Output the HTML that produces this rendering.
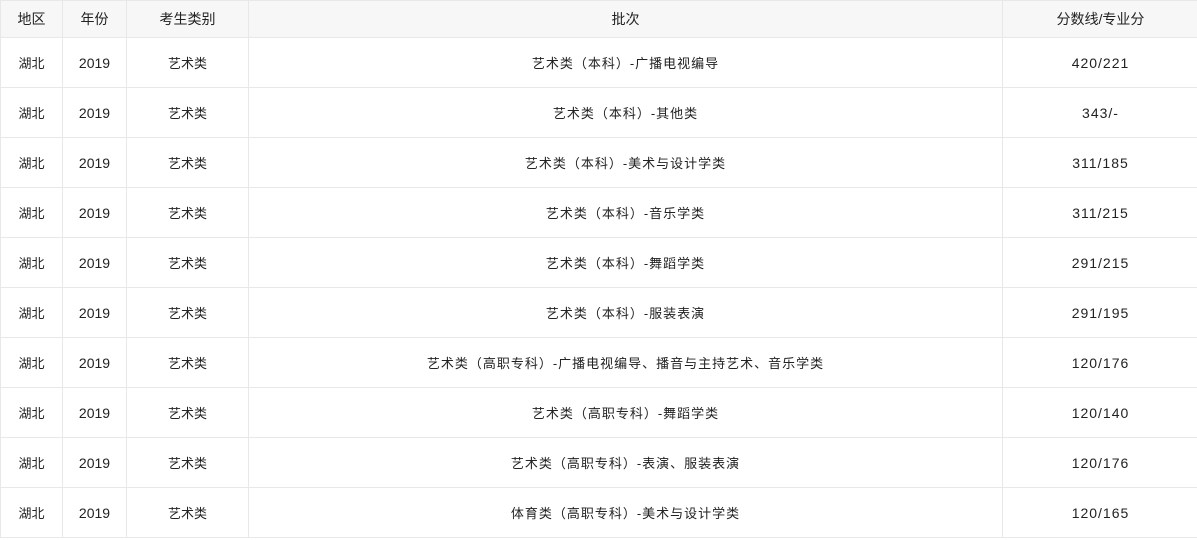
<!DOCTYPE html>
<html><head><meta charset="utf-8"><style>
body{margin:0;background:#fff;font-family:"Liberation Sans","Noto Sans CJK SC",sans-serif;color:#333;}
table{border-collapse:collapse;position:absolute;left:0;top:0;width:1198px;table-layout:fixed;}
td,th{border:1px solid #e8e8e8;text-align:center;padding:0;}
th{background:#f7f7f7;height:36px;font-weight:normal;font-size:14px;color:#222;}
td{height:49px;font-size:13px;color:#222;}
td:nth-child(2){font-size:14px;}
td:nth-child(4){letter-spacing:1px;}
td:nth-child(5){font-size:14px;letter-spacing:1px;}
</style></head><body>
<table>
<colgroup><col style="width:62px"><col style="width:64px"><col style="width:122px"><col style="width:754px"><col style="width:196px"></colgroup>
<tr><th>地区</th><th>年份</th><th>考生类别</th><th>批次</th><th>分数线/专业分</th></tr>
<tr><td>湖北</td><td>2019</td><td>艺术类</td><td>艺术类（本科）-广播电视编导</td><td>420/221</td></tr>
<tr><td>湖北</td><td>2019</td><td>艺术类</td><td>艺术类（本科）-其他类</td><td>343/-</td></tr>
<tr><td>湖北</td><td>2019</td><td>艺术类</td><td>艺术类（本科）-美术与设计学类</td><td>311/185</td></tr>
<tr><td>湖北</td><td>2019</td><td>艺术类</td><td>艺术类（本科）-音乐学类</td><td>311/215</td></tr>
<tr><td>湖北</td><td>2019</td><td>艺术类</td><td>艺术类（本科）-舞蹈学类</td><td>291/215</td></tr>
<tr><td>湖北</td><td>2019</td><td>艺术类</td><td>艺术类（本科）-服装表演</td><td>291/195</td></tr>
<tr><td>湖北</td><td>2019</td><td>艺术类</td><td>艺术类（高职专科）-广播电视编导、播音与主持艺术、音乐学类</td><td>120/176</td></tr>
<tr><td>湖北</td><td>2019</td><td>艺术类</td><td>艺术类（高职专科）-舞蹈学类</td><td>120/140</td></tr>
<tr><td>湖北</td><td>2019</td><td>艺术类</td><td>艺术类（高职专科）-表演、服装表演</td><td>120/176</td></tr>
<tr><td>湖北</td><td>2019</td><td>艺术类</td><td>体育类（高职专科）-美术与设计学类</td><td>120/165</td></tr>
</table>
</body></html>
